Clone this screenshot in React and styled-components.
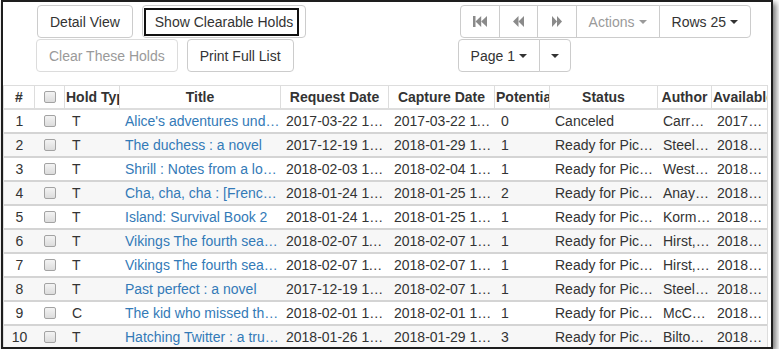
import React from 'react';
import styled, { createGlobalStyle } from 'styled-components';

const Global = createGlobalStyle`
  html, body { margin: 0; padding: 0; background: #fff; }
  body { font-family: "Liberation Sans", Arial, sans-serif; font-size: 14px; color: #333; }
  * { box-sizing: border-box; }
`;

const Frame = styled.div`
  margin-left: 1px;
  width: 772px;
  height: 349px;
  border: 2px solid #1e1e1e;
  box-shadow: 3px 3px 6px rgba(0, 0, 0, 0.55);
  background: #fff;
  overflow: hidden;
`;

const Toolbar = styled.div`
  display: flex;
  justify-content: space-between;
  align-items: flex-start;
  padding: 3px 20px 0 34px;
`;

const Stack = styled.div`
  display: flex;
  flex-direction: column;
  align-items: flex-start;
  gap: 1px;
`;

const BtnRow = styled.div`
  display: flex;
  gap: ${p => p.$gap}px;
  margin-left: ${p => p.$shift ?? 0}px;
`;

const Btn = styled.button`
  height: 33px;
  padding: 0 12px;
  border: 1px solid ${p => (p.disabled ? '#dcdcdc' : '#ccc')};
  border-radius: 4px;
  background: #fff;
  color: ${p => (p.disabled ? '#9a9a9a' : '#333')};
  font: 14px "Liberation Sans", Arial, sans-serif;
  display: inline-flex;
  align-items: center;
  justify-content: center;
  gap: 4px;
  cursor: pointer;
`;

const FocusBtn = styled(Btn)`
  padding: 0 6px 0 1px;
`;

const FocusRing = styled.span`
  height: 28px;
  display: flex;
  align-items: center;
  padding: 0 4px 0 9px;
  border: 2px solid #111;
`;

const Group = styled.div`
  display: flex;
  margin-left: ${p => p.$shift ?? 0}px;
`;

const GroupBtn = styled(Btn)`
  border-radius: 0;
  border-color: #ccc;
  padding: 0 ${p => p.$px ?? 12}px;
  margin-left: -1px;
  &:first-child { margin-left: 0; border-radius: 4px 0 0 4px; }
  &:last-child { border-radius: 0 4px 4px 0; }
`;

const Caret = styled.span`
  display: inline-block;
  width: 0;
  height: 0;
  border-top: 4px solid currentColor;
  border-left: 4px solid transparent;
  border-right: 4px solid transparent;
`;

const IconSvg = styled.svg`
  display: block;
  fill: #8a8a8a;
`;

const Table = styled.table`
  width: 765px;
  margin-top: 13px;
  table-layout: fixed;
  border-collapse: separate;
  border-spacing: 0;
  border: 1px solid #ddd;
  border-bottom: none;
  font-size: 14px;
`;

const Col = styled.col`
  width: ${p => p.$w}px;
`;

const Th = styled.th`
  line-height: 22px;
  padding: 0 1px;
  font-weight: bold;
  text-align: center;
  white-space: nowrap;
  overflow: hidden;
  color: #333;
  border-bottom: 2px solid #ddd;
  border-right: 1px solid #ddd;
  &:last-child { border-right: none; }
`;

const Tr = styled.tr`
  background: ${p => (p.$striped ? '#f7f7f7' : '#fff')};
`;

const Td = styled.td`
  line-height: 22px;
  padding: 0 ${p => p.$pr ?? 2}px 0 ${p => p.$pl ?? 5}px;
  text-align: ${p => p.$align || 'left'};
  white-space: nowrap;
  overflow: hidden;
  text-overflow: ellipsis;
  color: ${p => (p.$link ? '#337ab7' : '#333')};
  border-bottom: 2px solid #d4d4d4;
`;

const TitleLink = styled.a`
  color: inherit;
  text-decoration: none;
`;

const Check = styled.span`
  display: inline-block;
  width: 12px;
  height: 12px;
  vertical-align: middle;
  border: 1px solid #a3a3a3;
  border-radius: 2px;
  background: linear-gradient(#f3f3f3, #dcdcdc);
  margin-top: -2px;
`;

const FastBackward = () => (
  <IconSvg width="14" height="11" viewBox="0 0 14 11">
    <rect x="0" y="0" width="2.5" height="11" />
    <polygon points="2.5,5.5 8.2,0 8.2,11" />
    <polygon points="8.2,5.5 14,0 14,11" />
  </IconSvg>
);

const Backward = () => (
  <IconSvg width="11" height="11" viewBox="0 0 11 11">
    <polygon points="0,5.5 5.5,0 5.5,11" />
    <polygon points="5.5,5.5 11,0 11,11" />
  </IconSvg>
);

const Forward = () => (
  <IconSvg width="10" height="11" viewBox="0 0 10 11">
    <polygon points="0,0 5,5.5 0,11" />
    <polygon points="5,0 10,5.5 5,11" />
  </IconSvg>
);

const rows = [
  ['T', "Alice's adventures under ground", '2017-03-22 10:14', '2017-03-22 11:02', '0', 'Canceled', 'Carroll, Lewis', '2017-03-23'],
  ['T', 'The duchess : a novel', '2017-12-19 14:20', '2018-01-29 10:31', '1', 'Ready for Pickup', 'Steel, Danielle', '2018-01-29'],
  ['T', 'Shrill : Notes from a loud woman', '2018-02-03 12:45', '2018-02-04 13:10', '1', 'Ready for Pickup', 'West, Lindy', '2018-02-04'],
  ['T', 'Cha, cha, cha : [French edition]', '2018-01-24 15:33', '2018-01-25 10:12', '2', 'Ready for Pickup', 'Anaya, Rudolfo', '2018-01-25'],
  ['T', 'Island: Survival Book 2', '2018-01-24 16:02', '2018-01-25 10:40', '1', 'Ready for Pickup', 'Korman, Gordon', '2018-01-25'],
  ['T', 'Vikings The fourth season', '2018-02-07 11:11', '2018-02-07 14:25', '1', 'Ready for Pickup', 'Hirst, Michael', '2018-02-07'],
  ['T', 'Vikings The fourth season', '2018-02-07 11:12', '2018-02-07 14:26', '1', 'Ready for Pickup', 'Hirst, Michael', '2018-02-07'],
  ['T', 'Past perfect : a novel', '2017-12-19 14:21', '2018-02-07 15:02', '1', 'Ready for Pickup', 'Steel, Danielle', '2018-02-07'],
  ['C', 'The kid who missed the bus', '2018-02-01 10:05', '2018-02-01 16:44', '1', 'Ready for Pickup', 'McCarthy, Tom', '2018-02-01'],
  ['T', 'Hatching Twitter : a true story', '2018-01-26 13:30', '2018-01-29 12:18', '3', 'Ready for Pickup', 'Bilton, Nick', '2018-01-29'],
];

const widths = [31, 30, 55, 161, 108, 106, 55, 108, 54, 55];
const headers = ['#', null, 'Hold Type', 'Title', 'Request Date', 'Capture Date', 'Potential Items', 'Status', 'Author', 'Available Date'];

export default function App() {
  return (
    <>
      <Global />
      <Frame>
        <Toolbar>
          <Stack>
            <BtnRow $gap={9}>
              <Btn>Detail View</Btn>
              <FocusBtn>
                <FocusRing>Show Clearable Holds</FocusRing>
              </FocusBtn>
            </BtnRow>
            <BtnRow $gap={9} $shift={-1}>
              <Btn disabled>Clear These Holds</Btn>
              <Btn>Print Full List</Btn>
            </BtnRow>
          </Stack>
          <Stack>
            <Group>
              <GroupBtn $px={12}><FastBackward /></GroupBtn>
              <GroupBtn $px={13}><Backward /></GroupBtn>
              <GroupBtn $px={14}><Forward /></GroupBtn>
              <GroupBtn disabled>Actions <Caret /></GroupBtn>
              <GroupBtn>Rows 25 <Caret /></GroupBtn>
            </Group>
            <Group $shift={-2}>
              <GroupBtn>Page 1 <Caret /></GroupBtn>
              <GroupBtn $px={11}><Caret /></GroupBtn>
            </Group>
          </Stack>
        </Toolbar>
        <Table>
          <colgroup>
            {widths.map((w, i) => <Col key={i} $w={w} />)}
          </colgroup>
          <thead>
            <tr>
              {headers.map((h, i) => (
                <Th key={i}>{h === null ? <Check /> : h}</Th>
              ))}
            </tr>
          </thead>
          <tbody>
            {rows.map((r, i) => (
              <Tr key={i} $striped={i % 2 === 1}>
                <Td $align="center" $pl={1} $pr={1}>{i + 1}</Td>
                <Td $align="center" $pl={0} $pr={0}><Check /></Td>
                <Td $pl={7}>{r[0]}</Td>
                <Td $link $pl={5} $pr={0}><TitleLink href="#">{r[1]}</TitleLink></Td>
                <Td>{r[2]}</Td>
                <Td>{r[3]}</Td>
                <Td $pl={6}>{r[4]}</Td>
                <Td>{r[5]}</Td>
                <Td $pr={1}>{r[6]}</Td>
                <Td>{r[7]}</Td>
              </Tr>
            ))}
          </tbody>
        </Table>
      </Frame>
    </>
  );
}
